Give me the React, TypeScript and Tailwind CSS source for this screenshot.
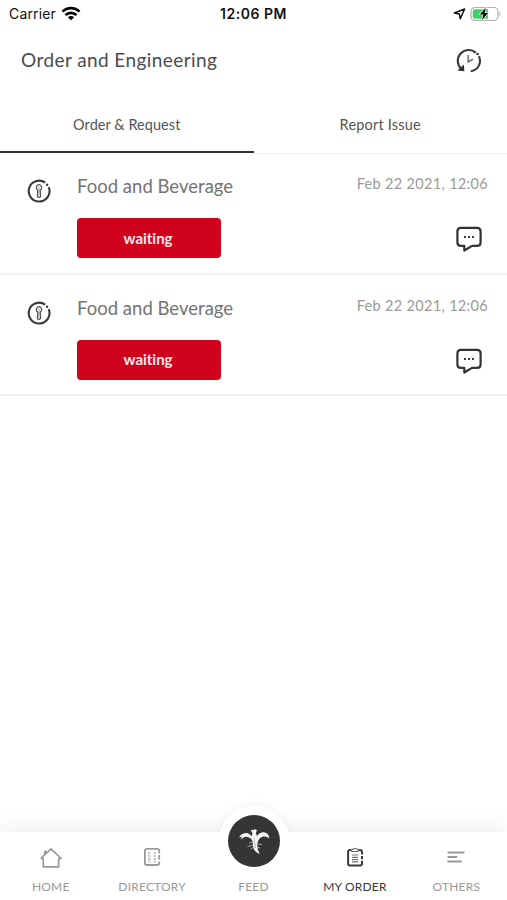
import React from "react";

function Wifi() {
  return (
    <svg width="20" height="15" viewBox="0 0 20 15" fill="none" stroke="#000" strokeWidth="2.7">
      <path d="M1.5 5.6C6.2 .9 13.8 .9 18.5 5.6" />
      <path d="M4.5 9C7.6 6.1 12.4 6.1 15.5 9" />
      <path d="M6.9 11.2C8.7 9.6 11.3 9.6 13.1 11.2L10 14.3Z" fill="#000" stroke="none" />
    </svg>
  );
}

function StatusBar() {
  return (
    <div className="grid h-7 grid-cols-3 items-center pl-[7px] pr-[7px] font-['Inter',sans-serif] text-[14px] leading-7 text-[#111]">
      <div className="flex items-center gap-[5px] pl-[2px]">
        <span className="tracking-[0.15px]">Carrier</span>
        <span className="-mt-[2px]"><Wifi /></span>
      </div>
      <div className="text-center font-semibold tracking-[0.52px]">12:06 PM</div>
      <div className="flex items-center justify-end gap-1">
        <svg width="13" height="13" viewBox="0 0 13 13" fill="none" stroke="#111" strokeWidth="1.5" strokeLinejoin="round">
          <path d="M1.3 5L11.6 1L7.3 10.8L6.4 6Z" />
        </svg>
        <svg className="-mr-[2px] -mt-px" width="32" height="16" viewBox="0 0 32 16">
          <rect x="1" y="1.5" width="27" height="13" rx="4" fill="#fff" stroke="#b0b0b0" strokeWidth="1.2" />
          <path d="M5 3.2H18V12.8H5Q2.8 12.8 2.8 10.6V5.4Q2.8 3.2 5 3.2Z" fill="#3dd265" />
          <path d="M29.5 5.7Q31.7 8 29.5 10.3Z" fill="#aaa" />
          <path d="M15.8 1.8L9.8 8.5H13.4L12 14L18.2 7.1H14.6Z" fill="#000" stroke="#fff" strokeWidth="1.2" paintOrder="stroke" />
        </svg>
      </div>
    </div>
  );
}

function HistoryIcon() {
  return (
    <svg className="mt-px" width="26" height="26" viewBox="0 0 26 26" fill="none" stroke="#3a3a3d">
      <path d="M5.6 21.2A10.5 10.5 0 0 1 19.8 4.6" strokeWidth="2.1" />
      <path d="M22.9 8.3A10.5 10.5 0 0 1 14.8 23.3" strokeWidth="2.1" />
      <circle cx="21.5" cy="6" r="1.3" fill="#3a3a3d" stroke="none" />
      <path d="M1.4 22.6L8.4 23.2L7.8 16.4Z" fill="#303033" stroke="none" />
      <path d="M12.2 7V13.8L17 11.2" stroke="#77777a" strokeWidth="1.7" />
    </svg>
  );
}

function ServiceIcon() {
  return (
    <svg width="24" height="24" viewBox="0 0 24 24" fill="none" stroke="#3a3a3d">
      <path d="M18.2 3.7A10.4 10.4 0 1 0 21.7 8.1" strokeWidth="2.1" />
      <circle cx="20.1" cy="5.7" r="1.2" fill="#3a3a3d" stroke="none" />
      <path d="M10.8 11.4Q9 10.2 9.4 7.7Q10 5.7 12 5.6Q14 5.7 14.6 7.7Q15 10.2 13.2 11.4L13.6 17.6Q12 19 10.4 17.6Z" stroke="#555558" strokeWidth="1.3" />
      <path d="M12 8V16" stroke="#88888b" strokeWidth=".8" />
    </svg>
  );
}

function ChatIcon() {
  return (
    <svg width="26" height="26" viewBox="0 0 26 26" fill="none" stroke="#333336" strokeWidth="2.2" strokeLinejoin="round">
      <path d="M5 1.9H21Q24.6 1.9 24.6 5.4V16.5Q24.6 19.9 21 19.9H16L8.3 24.5V19.9H5Q1.4 19.9 1.4 16.5V5.4Q1.4 1.9 5 1.9Z" />
      <path d="M8 11H9.9M12 11H13.9M16 11H17.9" strokeWidth="2" />
    </svg>
  );
}

function OrderRow() {
  return (
    <article className="flex h-[121.5px] border-b-2 border-[#f3f3f3] pl-[27px] pr-[19px]">
      <div className="w-[50px] pt-[26px]"><ServiceIcon /></div>
      <div className="flex-1 pt-[19px]">
        <h2 className="h-7 whitespace-nowrap text-[18.5px] font-normal leading-7 tracking-[0.02px] text-[#737373]">Food and Beverage</h2>
        <div className="mt-[18px] flex h-10 w-36 items-center justify-center rounded-[4px] bg-[#d0021b] pr-[2px] text-[15px] font-bold tracking-[-0.02px] text-[#ffe9ec]">waiting</div>
      </div>
      <div className="flex flex-col items-end pt-[21px]">
        <time className="h-5 whitespace-nowrap text-[14.5px] leading-5 tracking-[0.32px] text-[#999]">Feb 22 2021, 12:06</time>
        <div className="mr-[6px] mt-[32px]"><ChatIcon /></div>
      </div>
    </article>
  );
}

function NavItem({ label, active = false, children }: { label: string; active?: boolean; children: React.ReactNode }) {
  return (
    <div className={`flex flex-1 flex-col items-center pt-[14px] ${active ? "text-[#3a3a3d]" : "text-[#999]"}`}>
      <div className="flex h-6 items-center">{children}</div>
      <span className="mt-[7px] whitespace-nowrap text-[12px] leading-5 tracking-[0.2px]">{label}</span>
    </div>
  );
}

function BottomNav() {
  return (
    <nav className="relative flex h-[68px] bg-white shadow-[0_-4px_24px_rgba(0,0,0,0.07)]">
      <div className="absolute -top-[26px] left-1/2 h-[72px] w-[72px] -translate-x-1/2 rounded-full bg-white shadow-[0_-3px_10px_rgba(0,0,0,0.04)]" />
      <div className="absolute inset-0 bg-white" />
      <div className="relative flex w-full">
        <NavItem label="HOME">
          <svg width="22" height="22" viewBox="0 0 22 22" fill="none" stroke="currentColor" strokeWidth="1.7" strokeLinejoin="round">
            <path d="M.8 11.5L11 1.8L21.2 11.5H18.7V19.8H3.3V11.5H.8M4.7 7.5V4.3H6.8" />
          </svg>
        </NavItem>
        <NavItem label="DIRECTORY">
          <svg className="-mt-[3px]" width="18" height="20" viewBox="0 0 18 20" fill="none" stroke="currentColor">
            <path d="M16.2 6.5V3.8Q16.2 1.9 14.2 1.9H4Q1.9 1.9 1.9 4V16Q1.9 18 4 18H14.2Q16.2 18 16.2 16V14.5M16.2 8V12.5" strokeWidth="1.8" />
            <path d="M6.2 5V15.5M11.8 5V15.5" strokeWidth="2.4" strokeDasharray="2.2 .7" opacity=".55" />
          </svg>
        </NavItem>
        <NavItem label="FEED">{null}</NavItem>
        <NavItem label="MY ORDER" active>
          <svg className="-mt-[3px]" width="18" height="20" viewBox="0 0 18 20" fill="none" stroke="currentColor">
            <path d="M5 2.9H4Q2.1 2.9 2.1 5V16.6Q2.1 18.6 4 18.6H14Q16 18.6 16 16.6V13.8M13 2.9H14Q16 2.9 16 5V7.6M16 9V12.2" strokeWidth="2" />
            <path d="M5.8 2.2H7.5Q9 .3 10.5 2.2H12.2V4.5H5.8Z" stroke="#666" strokeWidth="1.1" />
            <path d="M6 8H12.2M6 10.3H12.2M6 12.6H12.2M6 14.8H12.2" stroke="#77777a" strokeWidth="1.2" />
          </svg>
        </NavItem>
        <NavItem label="OTHERS">
          <svg className="-mt-[3px]" width="18" height="20" viewBox="0 0 18 20" fill="none" stroke="currentColor" strokeWidth="1.8" strokeLinecap="round">
            <path d="M1.2 5.5H16.8M1.2 10H9.5M1.2 14.5H14" />
          </svg>
        </NavItem>
      </div>
      <div className="absolute -top-[17px] left-1/2 flex h-[52px] w-[52px] -translate-x-1/2 items-center justify-center rounded-full bg-[#353537]">
        <svg className="-mt-px" width="34" height="28" viewBox="0 0 34 28" fill="#f5f5f5">
          <path d="M14.8 9.5L15.4 6L13.5 2.8L16.5 3.3L17.5 2L20 3.2L18.8 6L20 9Q22.5 5 27 5.2Q32.2 6 32.2 11.5Q29.5 8.8 26 9.6Q21.5 11 20.5 16Q19.7 22 22.8 27Q15.8 24.5 16 17.5Q16 14 14.2 11.8Q11.5 9.5 8 9.8L3.5 12.5L5 9.8L2 10.2Q5 5.8 10 6Q13 6.5 14.8 9.5Z" />
          <path d="M16.3 15L12 16M16.5 18L10.5 19.5M17 20L13.5 22M20.5 17L25 17.5M20.5 20L23 21" stroke="#bdbdbd" strokeWidth=".8" fill="none" />
          <path d="M17 11L18.5 21" stroke="#999" strokeWidth=".6" />
        </svg>
      </div>
    </nav>
  );
}

export default function App() {
  return (
    <main className="flex h-[900px] w-[507px] flex-col overflow-hidden bg-white font-['Lato','Open_Sans',sans-serif]">
      <StatusBar />
      <header className="flex h-[68px] items-center justify-between pb-1 pl-[21px] pr-[25px]">
        <h1 className="text-[19px] font-normal leading-7 tracking-[0.42px] text-[#4a4c51]">Order and Engineering</h1>
        <HistoryIcon />
      </header>
      <div className="flex h-[57px] text-[14.5px] text-[#555]">
        <div className="flex flex-1 items-center justify-center border-b-2 border-[#303033] pt-[3px] tracking-[0.05px]">Order &amp; Request</div>
        <div className="flex flex-1 translate-y-px items-center justify-center border-b border-[#eee] tracking-[0.2px]">Report Issue</div>
      </div>
      <section className="flex-1">
        <OrderRow />
        <OrderRow />
      </section>
      <BottomNav />
    </main>
  );
}
